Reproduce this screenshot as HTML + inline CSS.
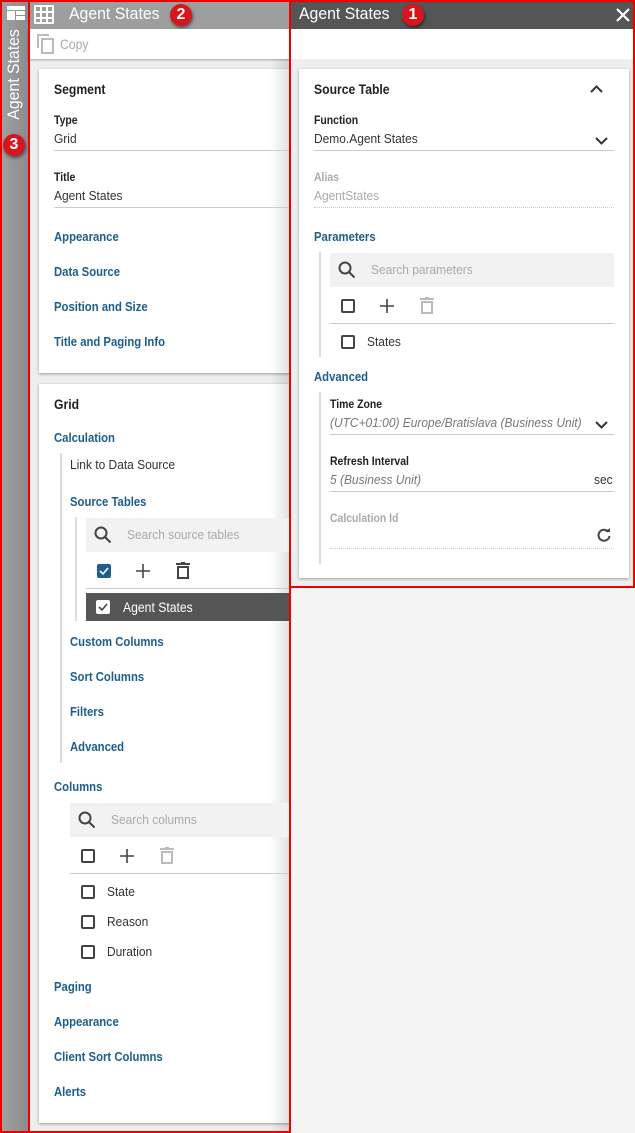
<!DOCTYPE html>
<html><head><meta charset="utf-8"><style>
*{margin:0;padding:0;box-sizing:border-box}
body{width:635px;height:1133px;overflow:hidden;position:relative;background:#f4f4f4;font-family:"Liberation Sans Narrow","Liberation Sans",sans-serif;color:#333}
.a{position:absolute}
.t{position:absolute;line-height:16px;white-space:nowrap;transform:scaleX(.87);transform-origin:0 50%}
.h{font-weight:bold;font-size:14px;color:#222}
.l{font-weight:bold;font-size:12px;color:#222}
.v{font-size:13px;color:#333;transform:scaleX(.92)}
.b{font-weight:bold;font-size:13px;color:#1d5e8c}
.g{color:#aaa}
.i{font-style:italic;color:#777}
.ln{position:absolute;height:1px;background:#ccc}
.dl{position:absolute;height:0;border-top:1px dotted #ccc}
.vl{position:absolute;width:2px;background:#ddd}
.cb{position:absolute;width:14px;height:14px;border:2px solid #444;border-radius:2px}
.badge{position:absolute;width:22px;height:22px;border-radius:50%;background:#d9141b;color:#fff;font:bold 16px/22px "Liberation Sans",sans-serif;text-align:center;box-shadow:1px 2px 3px rgba(0,0,0,.5)}
.card{position:absolute;background:#fff;box-shadow:0 1px 3px rgba(0,0,0,.35)}
.sb{position:absolute;height:34px;background:#f2f2f2}
</style></head><body>
<!-- left strip -->
<div class="a" style="left:0;top:0;width:28px;height:1133px;background:linear-gradient(90deg,#a0a0a0,#8c8c8c)"></div>
<svg class="a" style="left:7px;top:6px" width="18" height="14"><rect x="0" y="0" width="18" height="4" fill="#fff"/><rect x="0" y="5" width="8" height="9" fill="#fff"/><rect x="9" y="5" width="9" height="4" fill="#fff"/><rect x="9" y="10" width="9" height="4" fill="#fff"/></svg>
<div class="a" style="left:-33px;top:66px;width:94px;height:20px;text-align:center;transform:rotate(-90deg) scaleX(.93);color:#fff;font-size:17px;line-height:20px;white-space:nowrap">Agent States</div>
<div class="badge" style="left:3px;top:134px">3</div>

<!-- middle panel -->
<div class="a" style="left:28px;top:0;width:262px;height:1133px;overflow:hidden">
<div class="a" style="left:0;top:59px;width:262px;height:1074px;background:#eee"></div>
<div class="card" style="left:11px;top:69px;width:270px;height:304px"></div>
<div class="card" style="left:11px;top:384px;width:270px;height:739px"></div>
<div class="a" style="left:242px;top:59px;width:20px;height:1074px;background:linear-gradient(90deg,rgba(0,0,0,0),rgba(0,0,0,.12))"></div>
</div>
<div class="a" style="left:28px;top:0;width:262px;height:29px;background:#9e9e9e"></div>
<svg class="a" style="left:34px;top:5px" width="20" height="19"><g fill="#fff"><rect x="0" y="0" width="20" height="19" rx="1"/></g><g fill="#9e9e9e"><rect x="2" y="2" width="4" height="4"/><rect x="8" y="2" width="4" height="4"/><rect x="14" y="2" width="4" height="4"/><rect x="2" y="8" width="4" height="4"/><rect x="8" y="8" width="4" height="4"/><rect x="14" y="8" width="4" height="4"/><rect x="2" y="14" width="4" height="3"/><rect x="8" y="14" width="4" height="3"/><rect x="14" y="14" width="4" height="3"/></g></svg>
<div class="t" style="left:69px;top:4px;color:#fff;font-size:17px;line-height:20px;transform:scaleX(.93)">Agent States</div>
<div class="badge" style="left:170px;top:4px">2</div>
<div class="a" style="left:28px;top:29px;width:262px;height:30px;background:#fff;box-shadow:0 1px 2px rgba(0,0,0,.3)"></div>
<svg class="a" style="left:37px;top:34px" width="18" height="20"><path d="M1 14V1h11" fill="none" stroke="#bbb" stroke-width="2"/><rect x="5" y="5" width="11" height="14" fill="none" stroke="#bbb" stroke-width="2"/></svg>
<div class="t" style="left:60px;top:36px;font-size:14px;color:#aaa">Copy</div>

<div class="t h" style="left:54px;top:81px">Segment</div>
<div class="t l" style="left:54px;top:112px">Type</div>
<div class="t v" style="left:54px;top:131px">Grid</div>
<div class="ln" style="left:54px;top:150px;width:236px"></div>
<div class="t l" style="left:54px;top:169px">Title</div>
<div class="t v" style="left:54px;top:188px">Agent States</div>
<div class="ln" style="left:54px;top:207px;width:236px"></div>
<div class="t b" style="left:54px;top:229px">Appearance</div>
<div class="t b" style="left:54px;top:264px">Data Source</div>
<div class="t b" style="left:54px;top:299px">Position and Size</div>
<div class="t b" style="left:54px;top:334px">Title and Paging Info</div>

<div class="t h" style="left:54px;top:396px">Grid</div>
<div class="t b" style="left:54px;top:430px">Calculation</div>
<div class="vl" style="left:60px;top:453px;height:310px"></div>
<div class="t v" style="left:70px;top:457px">Link to Data Source</div>
<div class="t b" style="left:70px;top:494px">Source Tables</div>
<div class="vl" style="left:75px;top:517px;height:104px"></div>
<div class="sb" style="left:86px;top:518px;width:204px"></div>
<svg class="a" style="left:94px;top:526px" width="18" height="18"><circle cx="7" cy="7" r="5.5" fill="none" stroke="#444" stroke-width="2"/><path d="M11 11l5.5 5.5" stroke="#444" stroke-width="2"/></svg>
<div class="t v g" style="left:127px;top:527px">Search source tables</div>
<div class="a" style="left:97px;top:564px;width:14px;height:14px;background:#1d5e8c;border-radius:2px"></div>
<svg class="a" style="left:97px;top:564px" width="14" height="14"><path d="M3 7l3 3 5-6" fill="none" stroke="#fff" stroke-width="1.6"/></svg>
<svg class="a" style="left:136px;top:564px" width="14" height="14"><path d="M7 0v14M0 7h14" stroke="#444" stroke-width="1.6"/></svg>
<svg class="a" style="left:176px;top:562px" width="14" height="17"><path d="M0 2h14M5 0h4" stroke="#444" stroke-width="2"/><rect x="2" y="5" width="10" height="11" fill="none" stroke="#444" stroke-width="2"/></svg>
<div class="ln" style="left:86px;top:588px;width:204px;background:#ccc"></div>
<div class="a" style="left:86px;top:593px;width:204px;height:28px;background:#555"></div>
<div class="a" style="left:96px;top:600px;width:14px;height:14px;background:#fff;border-radius:2px"></div>
<svg class="a" style="left:96px;top:600px" width="14" height="14"><path d="M3 7l3 3 5-6" fill="none" stroke="#444" stroke-width="1.6"/></svg>
<div class="t" style="left:123px;top:599px;color:#fff;font-size:14px">Agent States</div>
<div class="t b" style="left:70px;top:634px">Custom Columns</div>
<div class="t b" style="left:70px;top:669px">Sort Columns</div>
<div class="t b" style="left:70px;top:704px">Filters</div>
<div class="t b" style="left:70px;top:739px">Advanced</div>
<div class="t b" style="left:54px;top:779px">Columns</div>
<div class="sb" style="left:70px;top:803px;width:220px"></div>
<svg class="a" style="left:78px;top:811px" width="18" height="18"><circle cx="7" cy="7" r="5.5" fill="none" stroke="#444" stroke-width="2"/><path d="M11 11l5.5 5.5" stroke="#444" stroke-width="2"/></svg>
<div class="t v g" style="left:111px;top:812px">Search columns</div>
<div class="cb" style="left:81px;top:849px"></div>
<svg class="a" style="left:120px;top:849px" width="14" height="14"><path d="M7 0v14M0 7h14" stroke="#444" stroke-width="1.6"/></svg>
<svg class="a" style="left:160px;top:847px" width="14" height="17"><path d="M0 2h14M5 0h4" stroke="#bbb" stroke-width="2"/><rect x="2" y="5" width="10" height="11" fill="none" stroke="#bbb" stroke-width="2"/></svg>
<div class="ln" style="left:70px;top:873px;width:220px"></div>
<div class="cb" style="left:81px;top:885px"></div><div class="t v" style="left:107px;top:884px">State</div>
<div class="cb" style="left:81px;top:915px"></div><div class="t v" style="left:107px;top:914px">Reason</div>
<div class="cb" style="left:81px;top:945px"></div><div class="t v" style="left:107px;top:944px">Duration</div>
<div class="t b" style="left:54px;top:979px">Paging</div>
<div class="t b" style="left:54px;top:1014px">Appearance</div>
<div class="t b" style="left:54px;top:1049px">Client Sort Columns</div>
<div class="t b" style="left:54px;top:1084px">Alerts</div>

<!-- right panel -->
<div class="a" style="left:290px;top:0;width:345px;height:29px;background:#555"></div>
<div class="t" style="left:299px;top:4px;color:#fff;font-size:17px;line-height:20px;transform:scaleX(.93)">Agent States</div>
<div class="badge" style="left:402px;top:4px">1</div>
<svg class="a" style="left:616px;top:8px" width="14" height="14"><path d="M1 1l12 12M13 1L1 13" stroke="#fff" stroke-width="2.2"/></svg>
<div class="a" style="left:290px;top:29px;width:345px;height:30px;background:#fff;box-shadow:0 1px 2px rgba(0,0,0,.3)"></div>
<div class="a" style="left:290px;top:59px;width:345px;height:528px;background:#eee"></div>
<div class="card" style="left:299px;top:69px;width:330px;height:509px"></div>
<div class="t h" style="left:314px;top:81px">Source Table</div>
<svg class="a" style="left:590px;top:85px" width="13" height="8"><path d="M1 7l5.5-5.5L12 7" fill="none" stroke="#333" stroke-width="2"/></svg>
<div class="t l" style="left:314px;top:112px">Function</div>
<div class="t v" style="left:314px;top:131px">Demo.Agent States</div>
<svg class="a" style="left:595px;top:137px" width="13" height="8"><path d="M1 1l5.5 5.5L12 1" fill="none" stroke="#333" stroke-width="2"/></svg>
<div class="ln" style="left:314px;top:150px;width:300px"></div>
<div class="t l g" style="left:314px;top:169px">Alias</div>
<div class="t v g" style="left:314px;top:188px">AgentStates</div>
<div class="dl" style="left:314px;top:207px;width:300px"></div>
<div class="t b" style="left:314px;top:229px">Parameters</div>
<div class="vl" style="left:319px;top:252px;height:105px"></div>
<div class="sb" style="left:330px;top:253px;width:284px"></div>
<svg class="a" style="left:338px;top:261px" width="18" height="18"><circle cx="7" cy="7" r="5.5" fill="none" stroke="#444" stroke-width="2"/><path d="M11 11l5.5 5.5" stroke="#444" stroke-width="2"/></svg>
<div class="t v g" style="left:371px;top:262px">Search parameters</div>
<div class="cb" style="left:341px;top:299px"></div>
<svg class="a" style="left:380px;top:299px" width="14" height="14"><path d="M7 0v14M0 7h14" stroke="#444" stroke-width="1.6"/></svg>
<svg class="a" style="left:420px;top:297px" width="14" height="17"><path d="M0 2h14M5 0h4" stroke="#bbb" stroke-width="2"/><rect x="2" y="5" width="10" height="11" fill="none" stroke="#bbb" stroke-width="2"/></svg>
<div class="ln" style="left:330px;top:323px;width:284px"></div>
<div class="cb" style="left:341px;top:335px"></div><div class="t v" style="left:367px;top:334px">States</div>
<div class="t b" style="left:314px;top:369px">Advanced</div>
<div class="vl" style="left:319px;top:392px;height:172px"></div>
<div class="t l" style="left:330px;top:396px">Time Zone</div>
<div class="t v i" style="left:330px;top:415px">(UTC+01:00) Europe/Bratislava (Business Unit)</div>
<svg class="a" style="left:595px;top:421px" width="13" height="8"><path d="M1 1l5.5 5.5L12 1" fill="none" stroke="#333" stroke-width="2"/></svg>
<div class="ln" style="left:330px;top:434px;width:284px"></div>
<div class="t l" style="left:330px;top:453px">Refresh Interval</div>
<div class="t v i" style="left:330px;top:472px">5 (Business Unit)</div>
<div class="t v" style="left:594px;top:472px">sec</div>
<div class="ln" style="left:330px;top:491px;width:284px"></div>
<div class="t l g" style="left:330px;top:510px">Calculation Id</div>
<svg class="a" style="left:597px;top:528px" width="14" height="14"><path d="M11.5 4A5.5 5.5 0 1 0 12.5 8" fill="none" stroke="#444" stroke-width="2"/><path d="M8 4h5V0z" fill="#444"/></svg>
<div class="dl" style="left:330px;top:548px;width:284px"></div>

<!-- red outlines -->
<div class="a" style="left:0;top:0;width:30px;height:1133px;border:2px solid #e00"></div>
<div class="a" style="left:28px;top:0;width:263px;height:1133px;border:2px solid #e00"></div>
<div class="a" style="left:289px;top:0;width:346px;height:588px;border:2px solid #e00"></div>
</body></html>
